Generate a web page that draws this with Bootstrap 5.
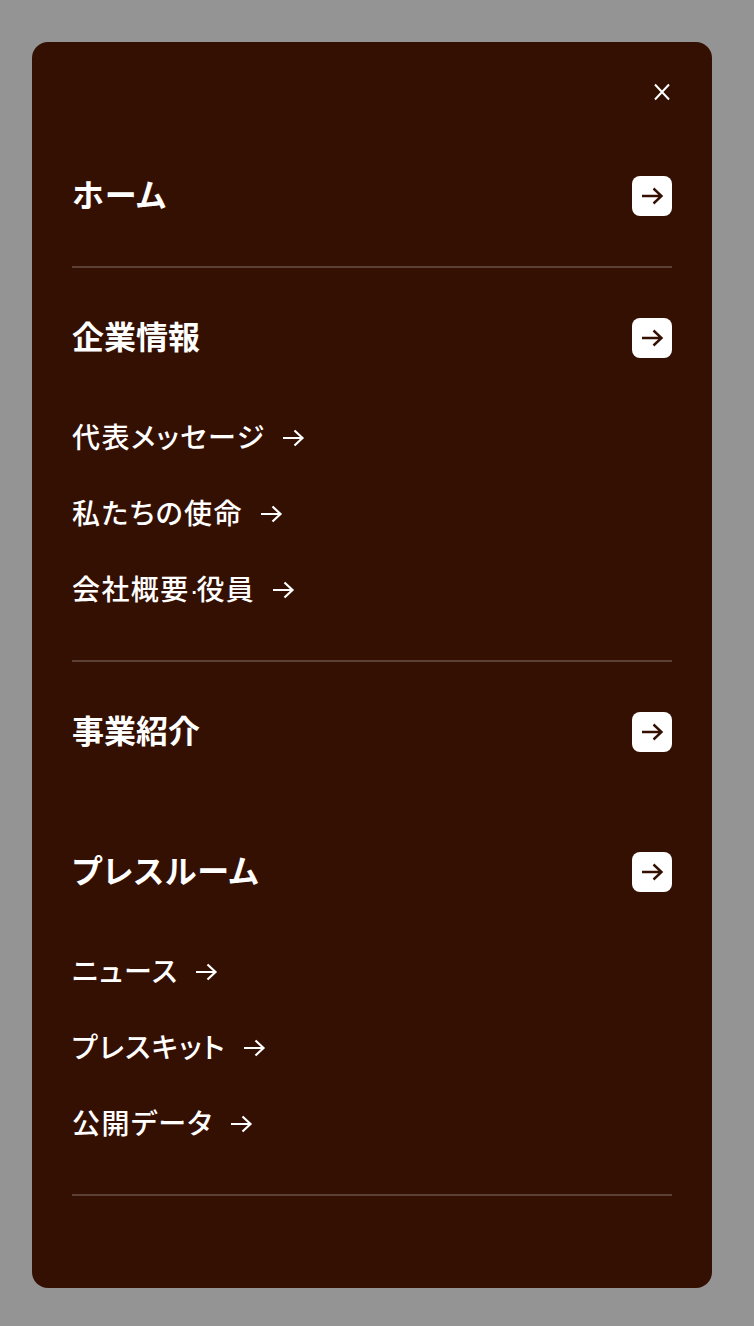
<!DOCTYPE html>
<html lang="ja"><head><meta charset="utf-8">
<link href="https://cdn.jsdelivr.net/npm/bootstrap@5.3.0/dist/css/bootstrap.min.css" rel="stylesheet">
<style>
html,body{height:100%;}
body{background:#949494;font-family:"Liberation Sans","Noto Sans CJK JP",sans-serif;padding:42px 42px 38px 32px;}
.sheet{background:#341002;border-radius:16px;height:1246px;padding:40px 40px 0;color:#fff;}
.closer{height:20px;}
.closer svg{width:20px;height:20px;display:block;}
.sec-head{height:40px;}
.sec-title{font-size:32px;font-weight:700;line-height:40px;color:#fff;text-decoration:none;margin-bottom:1px;font-feature-settings:"palt";letter-spacing:.04em;}
.kanji-title{letter-spacing:0;}
.go-btn{width:40px;height:40px;background:#fff;border-radius:8px;}
.go-btn svg{width:24px;height:24px;display:block;}
.rule{height:2px;background:#5c3f35;}
.sub-link{font-size:28px;font-weight:500;line-height:36px;height:40px;padding-top:4px;color:#fff;text-decoration:none;font-feature-settings:"palt";letter-spacing:.05em;}
.sub-link svg{width:24px;height:24px;margin-left:16px;margin-bottom:2px;}
.mid-dot{letter-spacing:-2.5px;}
.sublist{display:flex;flex-direction:column;gap:36px;margin-top:59px;}
.s1{margin-top:74px;}
.s2{margin-top:50px;}
.s3{margin-top:50px;}
.s4{margin-top:100px;}
.r1{margin-top:50px;}
.r2{margin-top:51px;}
.r3{margin-top:51px;}
</style></head><body>
<div class="sheet">
<div class="closer d-flex justify-content-end"><svg viewBox="0 0 20 20" fill="none" stroke="#fff" stroke-width="2"><path d="M3 2.5l14 15M17 2.5l-14 15"/></svg></div>
<div class="sec-head d-flex justify-content-between align-items-center s1"><a class="sec-title" href="#">ホーム</a><span class="go-btn d-flex align-items-center justify-content-center"><svg viewBox="0 0 24 24" fill="none" stroke="#341002" stroke-width="2.4"><path d="M2 12h19.5M13.5 4.5l8 7.5-8 7.5"/></svg></span></div>
<div class="rule r1"></div>
<div class="sec-head d-flex justify-content-between align-items-center s2"><a class="sec-title kanji-title" href="#">企業情報</a><span class="go-btn d-flex align-items-center justify-content-center"><svg viewBox="0 0 24 24" fill="none" stroke="#341002" stroke-width="2.4"><path d="M2 12h19.5M13.5 4.5l8 7.5-8 7.5"/></svg></span></div>
<div class="sublist">
<a class="sub-link d-flex align-items-center" href="#">代表メッセージ<svg viewBox="0 0 24 24" fill="none" stroke="#fff" stroke-width="2.2"><path d="M2 12h19.5M13.5 4.5l8 7.5-8 7.5"/></svg></a>
<a class="sub-link d-flex align-items-center" href="#">私たちの使命<svg viewBox="0 0 24 24" fill="none" stroke="#fff" stroke-width="2.2"><path d="M2 12h19.5M13.5 4.5l8 7.5-8 7.5"/></svg></a>
<a class="sub-link d-flex align-items-center" href="#"><span>会社概要<span class="mid-dot">·</span>役員</span><svg viewBox="0 0 24 24" fill="none" stroke="#fff" stroke-width="2.2"><path d="M2 12h19.5M13.5 4.5l8 7.5-8 7.5"/></svg></a>
</div>
<div class="rule r2"></div>
<div class="sec-head d-flex justify-content-between align-items-center s3"><a class="sec-title kanji-title" href="#">事業紹介</a><span class="go-btn d-flex align-items-center justify-content-center"><svg viewBox="0 0 24 24" fill="none" stroke="#341002" stroke-width="2.4"><path d="M2 12h19.5M13.5 4.5l8 7.5-8 7.5"/></svg></span></div>
<div class="sec-head d-flex justify-content-between align-items-center s4"><a class="sec-title" href="#">プレスルーム</a><span class="go-btn d-flex align-items-center justify-content-center"><svg viewBox="0 0 24 24" fill="none" stroke="#341002" stroke-width="2.4"><path d="M2 12h19.5M13.5 4.5l8 7.5-8 7.5"/></svg></span></div>
<div class="sublist">
<a class="sub-link d-flex align-items-center" href="#">ニュース<svg viewBox="0 0 24 24" fill="none" stroke="#fff" stroke-width="2.2"><path d="M2 12h19.5M13.5 4.5l8 7.5-8 7.5"/></svg></a>
<a class="sub-link d-flex align-items-center" href="#">プレスキット<svg viewBox="0 0 24 24" fill="none" stroke="#fff" stroke-width="2.2"><path d="M2 12h19.5M13.5 4.5l8 7.5-8 7.5"/></svg></a>
<a class="sub-link d-flex align-items-center" href="#">公開データ<svg viewBox="0 0 24 24" fill="none" stroke="#fff" stroke-width="2.2"><path d="M2 12h19.5M13.5 4.5l8 7.5-8 7.5"/></svg></a>
</div>
<div class="rule r3"></div>
</div>
<script src="https://cdn.jsdelivr.net/npm/bootstrap@5.3.0/dist/js/bootstrap.bundle.min.js"></script>
</body></html>
